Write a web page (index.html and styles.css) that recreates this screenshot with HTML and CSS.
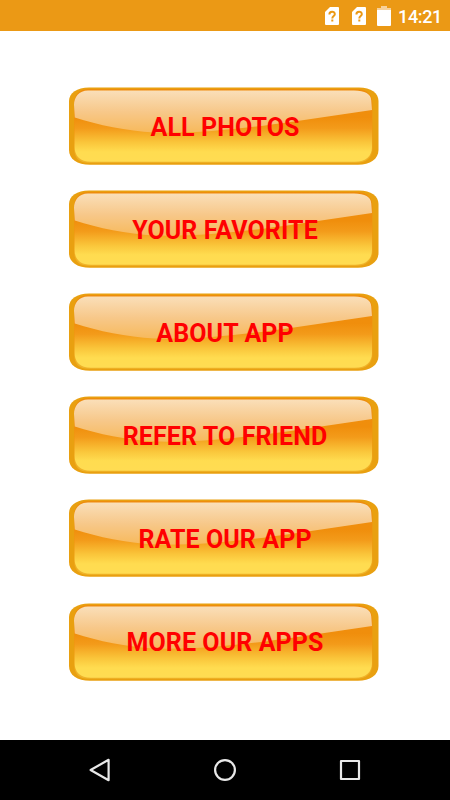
FILE: index.html
```html
<!DOCTYPE html>
<html lang="en">
<head>
<meta charset="utf-8">
<title>Photos</title>
<link rel="stylesheet" href="styles.css">
</head>
<body>
<svg class="defs" width="0" height="0" aria-hidden="true">
  <defs>
    <linearGradient id="body" x1="0" y1="0" x2="0" y2="1">
      <stop offset="0" stop-color="#ef8d0d"/>
      <stop offset=".38" stop-color="#f08e0c"/>
      <stop offset=".53" stop-color="#f39b1a"/>
      <stop offset=".73" stop-color="#fac63b"/>
      <stop offset=".86" stop-color="#ffdc50"/>
      <stop offset="1" stop-color="#ffdc52"/>
    </linearGradient>
    <linearGradient id="gloss" x1="0" y1="0" x2="0" y2="1">
      <stop offset="0" stop-color="#fadfb9"/>
      <stop offset=".5" stop-color="#f7c88a"/>
      <stop offset="1" stop-color="#f7b95b"/>
    </linearGradient>
    <linearGradient id="rim" x1="0" y1="0" x2="0" y2="1">
      <stop offset="0" stop-color="#ee8c0c"/>
      <stop offset=".55" stop-color="#f0970f"/>
      <stop offset="1" stop-color="#efb42a"/>
    </linearGradient>
  </defs>
  <symbol id="plate" viewBox="0 0 310 78">
    <path fill="#e9a010" d="M20 .4H290C302 .4 309.5 6 309.5 14V63C309.5 72 301 77.8 289 77.8H21C8 77.8 0 72 0 63V14C0 6 8 .4 20 .4Z"/>
    <path fill="url(#rim)" d="M20 2H287C298 2 303.5 8 303.5 17V61C303.5 70 298 75.8 287 75.8H20C10 75.8 5 71 5 61V17C5 8 10 2 20 2Z"/>
    <path fill="url(#body)" d="M20 3.4H286C297 3.4 303 9 303 18V60C303 69 297 74.8 286 74.8H22C11 74.8 5.6 69 5.6 60V18C5.6 9 10 3.4 20 3.4Z"/>
    <path fill="url(#gloss)" d="M19 3.4H285C296 3.4 302 7 302.2 13L303 23L225 34.5C172 42 135 46.5 85 45.6C58 44 29 38 5.8 30.5L5 18C5 10 10 3.4 19 3.4Z"/>
  </symbol>
</svg>
<header class="status">
  <svg class="sim" viewBox="0 0 14 18"><path fill="#fff" d="M5 0H13Q14 0 14 1V17Q14 18 13 18H1Q0 18 0 17V5Z"/><path fill="none" stroke="#eb9915" stroke-width="2" d="M4.4 7.4C4.4 3.8 9.9 3.9 9.8 7.2C9.8 9 7.3 9 7.3 11.4"/><path fill="#eb9915" d="M6.3 12.5h2v2H6.3z"/></svg>
  <svg class="sim" viewBox="0 0 14 18"><path fill="#fff" d="M5 0H13Q14 0 14 1V17Q14 18 13 18H1Q0 18 0 17V5Z"/><path fill="none" stroke="#eb9915" stroke-width="2" d="M4.4 7.4C4.4 3.8 9.9 3.9 9.8 7.2C9.8 9 7.3 9 7.3 11.4"/><path fill="#eb9915" d="M6.3 12.5h2v2H6.3z"/></svg>
  <svg class="battery" viewBox="0 0 14 20"><path fill="#f7d19a" d="M4 0H10V2H14V4H0V2H4Z"/><path fill="#fff" d="M0 4H14V19Q14 20 13 20H1Q0 20 0 19Z"/></svg>
  <span class="clock">14:21</span>
</header>
<main class="menu">
  <button class="item"><svg class="plate"><use href="#plate"/></svg><span class="label">ALL PHOTOS</span></button>
  <button class="item"><svg class="plate"><use href="#plate"/></svg><span class="label">YOUR FAVORITE</span></button>
  <button class="item"><svg class="plate"><use href="#plate"/></svg><span class="label">ABOUT APP</span></button>
  <button class="item"><svg class="plate"><use href="#plate"/></svg><span class="label">REFER TO FRIEND</span></button>
  <button class="item"><svg class="plate"><use href="#plate"/></svg><span class="label">RATE OUR APP</span></button>
  <button class="item"><svg class="plate"><use href="#plate"/></svg><span class="label">MORE OUR APPS</span></button>
</main>
<nav class="navbar">
  <svg class="nav-icon" viewBox="0 0 24 24"><path d="M20.6 1.8V22.2L2.6 12Z"/></svg>
  <svg class="nav-icon" viewBox="0 0 24 24"><circle cx="12" cy="12" r="9.9"/></svg>
  <svg class="nav-icon" viewBox="0 0 24 24"><rect x="3" y="3" width="18" height="18"/></svg>
</nav>
</body>
</html>
```
FILE: styles.css
```css
* {
  box-sizing: border-box;
}

body {
  margin: 0;
  height: 800px;
  display: flex;
  flex-direction: column;
  overflow: hidden;
  background: #fff;
  font-family: Roboto, sans-serif;
}

.defs {
  position: absolute;
}

.status {
  height: 31px;
  padding-right: 8px;
  display: flex;
  align-items: center;
  justify-content: flex-end;
  background: #eb9915;
  color: #fff;
}

.sim {
  width: 14px;
  height: 18px;
  margin: 1px 13px 0 0;
}

.sim + .battery {
  margin-left: -2px;
}

.battery {
  width: 14px;
  height: 20px;
  margin-right: 7px;
}

.clock {
  font-size: 18px;
  font-weight: 500;
  line-height: 31px;
  letter-spacing: -0.35px;
  padding-top: 1px;
}

.menu {
  flex: 1;
  padding-top: 56px;
  display: flex;
  flex-direction: column;
  align-items: center;
  gap: 25.12px;
}

.item {
  position: relative;
  width: 312px;
  height: 78px;
  padding: 0;
  border: 0;
  background: none;
  display: flex;
  align-items: center;
  justify-content: center;
  font: 700 25px/30px Roboto, sans-serif;
  letter-spacing: 0.1px;
  color: #f00;
}

.plate {
  position: absolute;
  left: 0;
  top: 0;
  width: 310px;
  height: 78px;
}

.label {
  position: relative;
  padding-top: 3px;
}

.navbar {
  height: 60px;
  padding: 0 88px;
  display: flex;
  align-items: center;
  justify-content: space-between;
  background: #000;
}

.nav-icon {
  width: 24px;
  height: 24px;
  fill: none;
  stroke: #e8e8e8;
  stroke-width: 2.2;
  stroke-linejoin: round;
}
```
